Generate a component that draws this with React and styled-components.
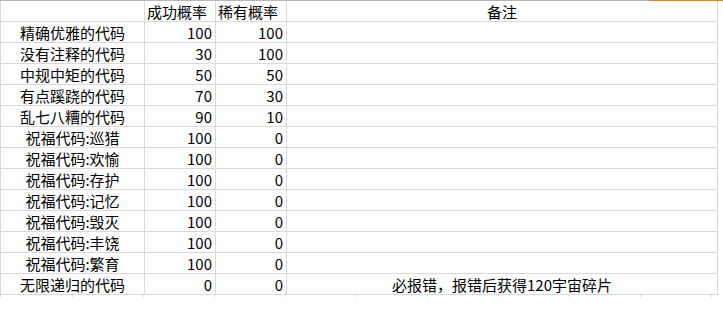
import styled, { createGlobalStyle } from "styled-components";

const GlobalStyle = createGlobalStyle`
	html, body {
		margin: 0;
		padding: 0;
		background: #fff;
	}
	body {
		font-family: "Noto Sans CJK SC", "Noto Sans", sans-serif;
		color: #000;
	}
`;

const Sheet = styled.div`
	width: 723px;
	height: 311px;
	overflow: hidden;
	background: #fff;
`;

const TopEdge = styled.div`
	display: flex;
	height: 1px;
	background: #b4b8bd;
`;

const Selected = styled.div`
	margin-left: auto;
	width: 74px;
	background: #d38b2c;
`;

const Grid = styled.div`
	display: grid;
	grid-template-columns: 144px 71px 71px 431px;
	grid-auto-rows: 21px;
	width: 721px;
	border-left: 1px solid #d9d9d9;
	border-top: none;
`;

const Cell = styled.div`
	display: flex;
	align-items: center;
	justify-content: ${(p) =>
		p.$align === "right" ? "flex-end" : p.$align === "left" ? "flex-start" : "center"};
	padding: ${(p) => (p.$align === "right" ? "0 3px 0 0" : p.$align === "left" ? "0 0 0 2px" : "0")};
	border-right: 1px solid #d9d9d9;
	border-bottom: 1px solid #d9d9d9;
	font-size: 15px;
	line-height: 1;
	white-space: nowrap;
	overflow: hidden;
`;

const TailRow = styled.div`
	display: grid;
	grid-template-columns: 72px repeat(9, 71px);
	height: 2px;
	width: 721px;
	border-left: 1px solid #d9d9d9;
`;

const TailCell = styled.div`
	border-right: 1px solid #d9d9d9;
`;

const rows = [
	["精确优雅的代码", 100, 100, ""],
	["没有注释的代码", 30, 100, ""],
	["中规中矩的代码", 50, 50, ""],
	["有点蹊跷的代码", 70, 30, ""],
	["乱七八糟的代码", 90, 10, ""],
	["祝福代码:巡猎", 100, 0, ""],
	["祝福代码:欢愉", 100, 0, ""],
	["祝福代码:存护", 100, 0, ""],
	["祝福代码:记忆", 100, 0, ""],
	["祝福代码:毁灭", 100, 0, ""],
	["祝福代码:丰饶", 100, 0, ""],
	["祝福代码:繁育", 100, 0, ""],
	["无限递归的代码", 0, 0, "必报错，报错后获得120宇宙碎片"],
];

export default function App() {
	return (
		<Sheet>
			<GlobalStyle />
			<TopEdge>
				<Selected />
			</TopEdge>
			<Grid>
				<Cell />
				<Cell $align="left">成功概率</Cell>
				<Cell $align="left">稀有概率</Cell>
				<Cell>备注</Cell>
				{rows.map(([name, success, rare, note]) => (
					<Row key={name} name={name} success={success} rare={rare} note={note} />
				))}
			</Grid>
			<TailRow>
				{Array.from({ length: 10 }).map((_, i) => (
					<TailCell key={i} />
				))}
			</TailRow>
		</Sheet>
	);
}

function Row({ name, success, rare, note }) {
	return (
		<>
			<Cell>{name}</Cell>
			<Cell $align="right">{success}</Cell>
			<Cell $align="right">{rare}</Cell>
			<Cell>{note}</Cell>
		</>
	);
}
